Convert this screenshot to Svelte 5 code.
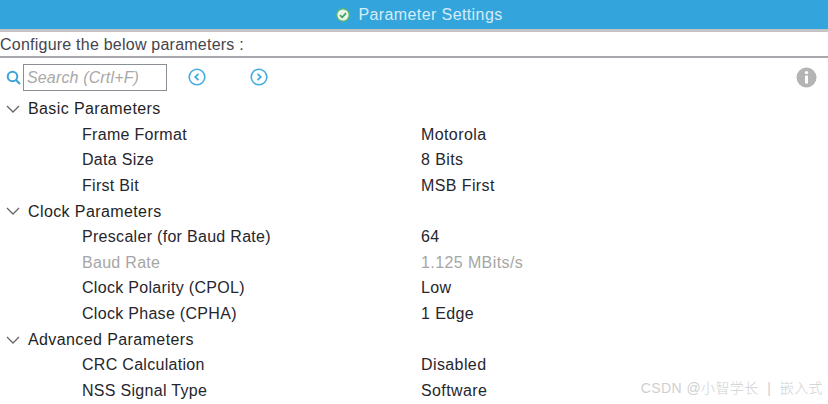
<script lang="ts">
  interface Param {
    name: string
    value: string
    disabled?: boolean
  }

  const groups: { title: string; params: Param[] }[] = [
    {
      title: 'Basic Parameters',
      params: [
        { name: 'Frame Format', value: 'Motorola' },
        { name: 'Data Size', value: '8 Bits' },
        { name: 'First Bit', value: 'MSB First' },
      ],
    },
    {
      title: 'Clock Parameters',
      params: [
        { name: 'Prescaler (for Baud Rate)', value: '64' },
        { name: 'Baud Rate', value: '1.125 MBits/s', disabled: true },
        { name: 'Clock Polarity (CPOL)', value: 'Low' },
        { name: 'Clock Phase (CPHA)', value: '1 Edge' },
      ],
    },
    {
      title: 'Advanced Parameters',
      params: [
        { name: 'CRC Calculation', value: 'Disabled' },
        { name: 'NSS Signal Type', value: 'Software' },
      ],
    },
  ]
</script>

<div class="panel">
  <header class="title">
    <svg width="14" height="14" viewBox="0 0 14 14">
      <circle cx="7" cy="7" r="6.2" fill="#e8f4ec" stroke="#5cb85c" stroke-width="1.2" />
      <path d="M4 7.2 L6.2 9.3 L10 5.2" fill="none" stroke="#3fa45a" stroke-width="1.7" />
    </svg>
    <span>Parameter Settings</span>
  </header>

  <div class="configure">Configure the below parameters :</div>

  <div class="toolbar">
    <svg class="search-icon" width="15" height="15" viewBox="0 0 15 15">
      <circle cx="6.5" cy="6.5" r="4.8" fill="none" stroke="#3ba3d8" stroke-width="2" />
      <path d="M10 10 L14 14" stroke="#3ba3d8" stroke-width="2.2" />
    </svg>
    <div class="search">Search (Crtl+F)</div>
    <svg class="prev" width="18" height="18" viewBox="0 0 18 18">
      <circle cx="9" cy="9" r="7.8" fill="none" stroke="#45ace0" stroke-width="1.6" />
      <path d="M10.5 5.8 L7.2 9 L10.5 12.2" fill="none" stroke="#45ace0" stroke-width="1.8" />
    </svg>
    <svg class="next" width="18" height="18" viewBox="0 0 18 18">
      <circle cx="9" cy="9" r="7.8" fill="none" stroke="#45ace0" stroke-width="1.6" />
      <path d="M7.5 5.8 L10.8 9 L7.5 12.2" fill="none" stroke="#45ace0" stroke-width="1.8" />
    </svg>
    <svg class="info" width="21" height="21" viewBox="0 0 21 21">
      <circle cx="10.5" cy="10.5" r="10" fill="#b4b4b4" />
      <circle cx="10.5" cy="5.6" r="1.7" fill="#fff" />
      <rect x="9" y="8.6" width="3" height="8" fill="#fff" />
    </svg>
  </div>

  {#each groups as group}
    <div class="group">
      <svg class="chevron" width="14" height="8" viewBox="0 0 14 8">
        <path d="M1 1 L7 7 L13 1" fill="none" stroke="#666" stroke-width="1.3" />
      </svg>
      <span>{group.title}</span>
    </div>
    {#each group.params as p}
      <div class="row" class:disabled={p.disabled}>
        <span class="name">{p.name}</span>
        <span class="value">{p.value}</span>
      </div>
    {/each}
  {/each}

  <div class="watermark">CSDN @小智学长&nbsp; |&nbsp; 嵌入式</div>
</div>

<style>
  :global(body) {
    margin: 0;
    background: #fff;
  }

  .panel {
    position: relative;
    width: 828px;
    height: 404px;
    overflow: hidden;
    font-family: 'Liberation Sans', Arial, sans-serif;
    font-size: 16px;
    letter-spacing: 0.3px;
    color: #26262e;
  }

  .title {
    height: 29px;
    background: #34a5dc;
    border-bottom: 3px solid #c4c4c6;
    display: flex;
    align-items: center;
    justify-content: center;
    gap: 8px;
    padding-left: 11px;
    color: #d4ecf8;
    letter-spacing: 0.4px;
  }

  .configure {
    height: 24px;
    line-height: 25px;
    border-bottom: 2px solid #a8a8ac;
    color: #45454d;
    letter-spacing: 0.23px;
  }

  .toolbar {
    height: 38px;
    display: flex;
    align-items: center;
  }

  .search-icon {
    margin-left: 6px;
  }

  .search {
    width: 144px;
    height: 27px;
    margin-left: 2px;
    box-sizing: border-box;
    border: 1px solid #8a8f96;
    padding-left: 3px;
    line-height: 25px;
    font-style: italic;
    color: #a8a8a8;
    letter-spacing: 0.15px;
  }

  .prev {
    margin-left: 21px;
  }

  .next {
    margin-left: 44px;
  }

  .info {
    margin-left: auto;
    margin-right: 11px;
  }

  .group,
  .row {
    height: 25.65px;
    line-height: 25.65px;
    display: flex;
    align-items: center;
  }

  .group {
    color: #1f1f26;
    letter-spacing: 0.4px;
  }

  .chevron {
    margin-left: 6px;
    margin-right: 8px;
  }

  .name {
    width: 339px;
    margin-left: 82px;
    flex: none;
  }

  .disabled {
    color: #a6a6a6;
  }

  .value {
    letter-spacing: 0.4px;
  }

  .watermark {
    position: absolute;
    right: 5px;
    bottom: 7px;
    font-family: 'Liberation Sans', 'Noto Sans CJK SC', sans-serif;
    font-size: 14px;
    font-weight: 300;
    color: #d0d0d0;
    letter-spacing: 0.4px;
  }
</style>
